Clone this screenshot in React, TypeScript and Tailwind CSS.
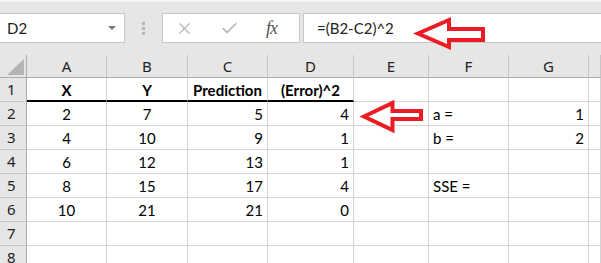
import { X, Check } from "lucide-react";

// Excel-ish sheet: formula bar on top, small grid below, two hand-drawn red arrows.
const COLS = ["A", "B", "C", "D", "E", "F", "G", ""];
const ALIGN = ["justify-center", "justify-center", "justify-end", "justify-end", "justify-start", "justify-start", "justify-end", "justify-start"];

const ROWS: string[][] = [
  ["X", "Y", "Prediction", "(Error)^2", "", "", "", ""],
  ["2", "7", "5", "4", "", "a =", "1", ""],
  ["4", "10", "9", "1", "", "b =", "2", ""],
  ["6", "12", "13", "1", "", "", "", ""],
  ["8", "15", "17", "4", "", "SSE =", "", ""],
  ["10", "21", "21", "0", "", "", "", ""],
  ["", "", "", "", "", "", "", ""],
  ["", "", "", "", "", "", "", ""],
];

function FormulaBar() {
  return (
    <div className="h-[55px] bg-[#e6e6e6] border-t-2 border-[#f2f2f2] flex items-start pt-[11px]">
      {/* name box */}
      <div className="w-[126px] h-[30px] -ml-px bg-white border border-[#c6c6c6] flex items-center justify-between pl-[7px] pr-[8px]">
        <span className="text-[15px] text-[#222]">D2</span>
        <span className="w-0 h-0 border-l-[4px] border-r-[4px] border-t-[4px] border-l-transparent border-r-transparent border-t-[#777]" />
      </div>
      {/* grip */}
      <div className="w-[37px] h-[30px] flex flex-col items-center justify-center gap-[2px]">
        <span className="w-[3px] h-[3px] bg-[#b4b4b4]" />
        <span className="w-[3px] h-[3px] bg-[#b4b4b4]" />
        <span className="w-[3px] h-[3px] bg-[#b4b4b4]" />
      </div>
      {/* cancel / enter / fx */}
      <div className="w-[138px] h-[30px] bg-white border border-[#c6c6c6] flex items-center pl-[12px]">
        <X className="w-[19px] h-[19px] text-[#b8b8b8]" strokeWidth={1.6} />
        <Check className="w-[19px] h-[19px] text-[#b8b8b8] ml-[26px]" strokeWidth={2.2} />
        <span className="ml-[27px] font-['Liberation_Serif',serif] italic text-[18px] text-[#555] leading-none tracking-[-1px]">fx</span>
      </div>
      {/* formula */}
      <div className="flex-1 ml-[3px] -mr-px h-[30px] bg-white border border-[#c6c6c6] flex items-center pl-[13px]">
        <span className="text-[15px] text-[#222]">=(B2-C2)^2</span>
      </div>
    </div>
  );
}

function Sheet() {
  return (
    <div className="grid grid-cols-[27px_80px_81px_80px_86px_75px_80px_80px_1fr] grid-rows-[23px_24px_24px_24px_24px_24px_24px_24px_24px]">
      {/* select-all corner */}
      <div className="bg-[#e6e6e6] border-r border-b border-[#ababab] flex items-end justify-end pr-[2px] pb-[2px]">
        <svg width="17" height="16" viewBox="0 0 17 16">
          <polygon points="0,16 17,16 17,0" fill="#b4b4b4" />
        </svg>
      </div>
      {COLS.map((c, i) => (
        <div key={i} className="bg-[#e6e6e6] border-r border-b border-r-[#c6c6c6] border-b-[#ababab] flex items-center justify-center font-['Noto_Sans',sans-serif] text-[15px] text-[#222]">
          {c}
        </div>
      ))}
      {ROWS.map((row, r) => (
        <Row key={r} index={r} row={row} />
      ))}
    </div>
  );
}

function Row({ index, row }: { index: number; row: string[] }) {
  const header = index === 0;
  return (
    <>
      <div className="bg-[#e6e6e6] border-r border-b border-r-[#ababab] border-b-[#c6c6c6] flex items-center pl-[7px] font-['Noto_Sans',sans-serif] text-[15px] text-[#222]">
        {index + 1}
      </div>
      {row.map((v, c) => (
        <div
          key={c}
          className={`border-r border-[#d4d4d4] flex items-center px-[4px] pt-[2px] text-[15px] text-black whitespace-nowrap overflow-hidden ${
            header ? "justify-center font-bold" : ALIGN[c]
          } ${header && c < 4 ? "border-b-2 border-b-black" : "border-b"}`}
        >
          {v}
        </div>
      ))}
    </>
  );
}

export default function App() {
  return (
    <div className="w-[601px] h-[263px] overflow-hidden bg-white relative font-['Lato',sans-serif]">
      <FormulaBar />
      <Sheet />
      <svg className="absolute inset-0 pointer-events-none" width="601" height="263" viewBox="0 0 601 263">
        <polygon
          points="418,33.5 449,20 449,29 483,29 483,40 449,40 449,47"
          fill="white"
          stroke="#ec1c24"
          strokeWidth="4"
        />
        <polygon
          points="364,116.5 392.5,103 392.5,111 421,111 421,119 392.5,119 392.5,130"
          fill="white"
          stroke="#ec1c24"
          strokeWidth="4"
        />
      </svg>
    </div>
  );
}
